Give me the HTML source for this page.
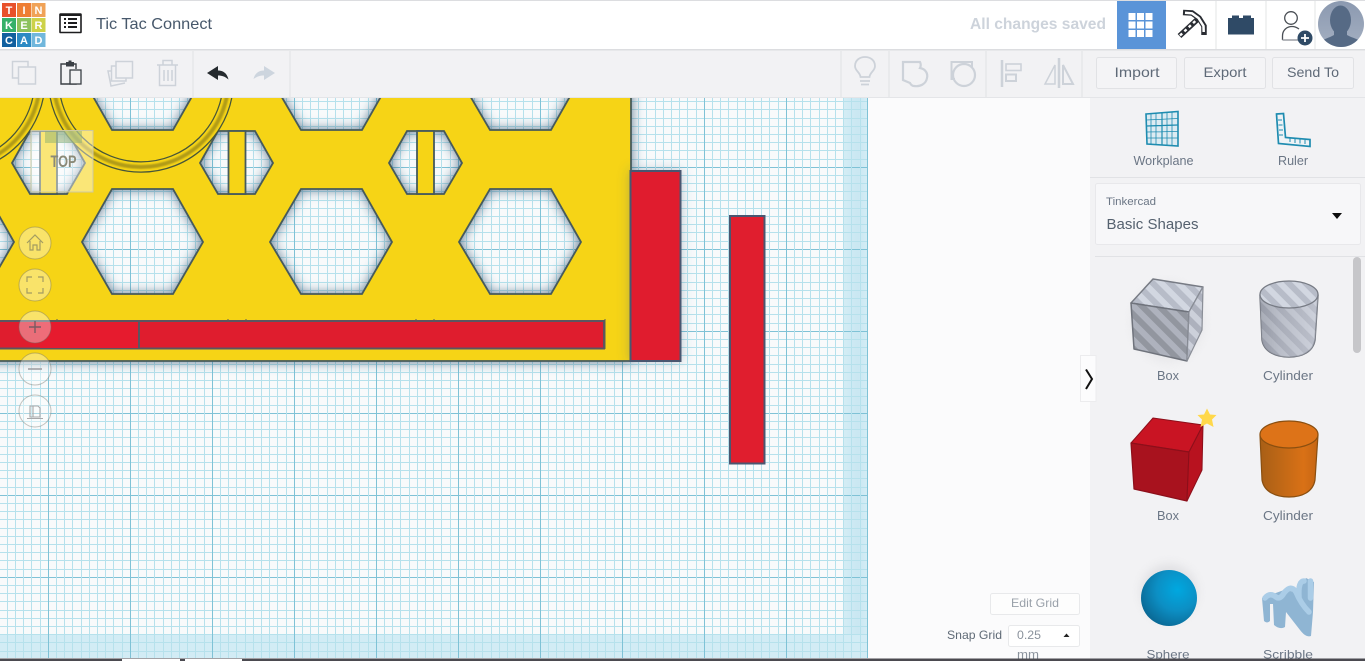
<!DOCTYPE html>
<html><head><meta charset="utf-8"><title>Tic Tac Connect</title>
<style>
html,body{margin:0;padding:0;width:1365px;height:661px;overflow:hidden;background:#fff}
svg{display:block;position:absolute;left:0;top:0}
text{font-family:"Liberation Sans",sans-serif}
</style></head><body>
<svg width="1365" height="661" viewBox="0 0 1365 661" xmlns="http://www.w3.org/2000/svg">
<defs>
<g id="vcol" shape-rendering="crispEdges" fill="none">
<path d="M8.500 97V658M16.500 97V658M24.500 97V658M33.500 97V658M41.500 97V658M49.500 97V658M57.500 97V658M65.500 97V658M74.500 97V658" stroke="#b6e1ec"/>
<path d="M.5 97V658" stroke="#7fc2d6"/>
</g>
<g id="hrow" shape-rendering="crispEdges" fill="none">
<path d="M0 8.500H868M0 16.500H868M0 24.500H868M0 33.500H868M0 41.500H868M0 49.500H868M0 57.500H868M0 65.500H868M0 74.500H868" stroke="#b6e1ec"/>
<path d="M0 .5H868" stroke="#7fc2d6"/>
</g>
<filter id="sh" x="-10%" y="-10%" width="120%" height="120%"><feDropShadow dx="0" dy="0" stdDeviation="6" flood-color="#2f5272" flood-opacity=".75"/></filter>
<filter id="sh2" x="-30%" y="-10%" width="160%" height="120%"><feDropShadow dx="0" dy="0" stdDeviation="6" flood-color="#3d5f7d" flood-opacity=".35"/></filter>
<filter id="soft" x="-30%" y="-30%" width="160%" height="160%"><feGaussianBlur stdDeviation="5"/></filter>
<filter id="b1" x="-5%" y="-5%" width="110%" height="110%"><feGaussianBlur stdDeviation=".8"/></filter>
<pattern id="hT" width="12" height="12" patternUnits="userSpaceOnUse" patternTransform="rotate(-45)"><rect width="12" height="12" fill="#d2d7e1"/><rect width="6" height="12" fill="#b7bcc8"/></pattern>
<pattern id="hF" width="12" height="12" patternUnits="userSpaceOnUse" patternTransform="rotate(-45)"><rect width="12" height="12" fill="#aeb2bd"/><rect width="6" height="12" fill="#92969f"/></pattern>
<pattern id="hR" width="12" height="12" patternUnits="userSpaceOnUse" patternTransform="rotate(-45)"><rect width="12" height="12" fill="#ccd0da"/><rect width="6" height="12" fill="#adb1bd"/></pattern>
<linearGradient id="cylS" x1="0" x2="1" y1="0" y2="0"><stop offset="0" stop-color="#7d818c"/><stop offset=".35" stop-color="#a5a9b4"/><stop offset="1" stop-color="#d0d4de"/></linearGradient>
<linearGradient id="cylO" x1="0" x2="1" y1="0" y2="0"><stop offset="0" stop-color="#a85f16"/><stop offset=".75" stop-color="#d97116"/><stop offset="1" stop-color="#c56614"/></linearGradient>
<radialGradient id="sph" cx=".65" cy=".35" r=".75"><stop offset="0" stop-color="#00a8e0"/><stop offset=".5" stop-color="#0c8fc4"/><stop offset="1" stop-color="#0a648f"/></radialGradient>
<linearGradient id="band" x1="0" x2="1" y1="0" y2="0"><stop offset="0" stop-color="#d4edf5"/><stop offset=".6" stop-color="#c9e7f2"/><stop offset="1" stop-color="#d4edf5"/></linearGradient>
<linearGradient id="avbg" x1="0" x2="0" y1="0" y2="1"><stop offset="0" stop-color="#8b99b0"/><stop offset="1" stop-color="#a4afc1"/></linearGradient>
<clipPath id="canvas"><rect x="0" y="97" width="868" height="561"/></clipPath>
<clipPath id="av"><circle cx="1341" cy="24" r="23"/></clipPath>
</defs>

<!-- page backgrounds -->
<rect width="1365" height="661" fill="#fbfbfc"/>

<!-- grid -->
<g clip-path="url(#canvas)">
<rect x="0" y="97" width="868" height="561" fill="#f8fafb"/>
<rect x="843" y="97" width="25" height="561" fill="url(#band)"/>
<rect x="0" y="635" width="868" height="23" fill="#d2ecf5"/>
<use href="#hrow" y="85"/><use href="#hrow" y="167"/><use href="#hrow" y="249"/><use href="#hrow" y="331"/><use href="#hrow" y="413"/><use href="#hrow" y="495"/><use href="#hrow" y="577"/>
<use href="#vcol" x="-34"/><use href="#vcol" x="48"/><use href="#vcol" x="130"/><use href="#vcol" x="212"/><use href="#vcol" x="294"/><use href="#vcol" x="376"/><use href="#vcol" x="458"/><use href="#vcol" x="540"/><use href="#vcol" x="622"/><use href="#vcol" x="704"/><use href="#vcol" x="786"/>
<path d="M867.5 97V658" stroke="#7fc2d6"/>

<!-- yellow plate with holes -->
<path filter="url(#sh)" fill="#f6d416" fill-rule="evenodd" stroke="#465a5c" stroke-width="1.800" d="M-60 60H631V361H-60Z
M82 242L112 189H173L203 242L173 294H112Z
M270 242L301 189H362L392 242L362 294H301Z
M459 242L490 189H551L581 242L551 294H490Z
M-107 242L-77 189H-16L14 242L-16 294H-77Z
M82 77L112 24H173L203 77L173 130H112Z
M270 77L301 24H362L392 77L362 130H301Z
M459 77L490 24H551L581 77L551 130H490Z
M12 163L30 131H67L85 163L67 194H30Z
M200 163L218 131H255L273 163L255 194H218Z
M389 163L407 131H444L462 163L444 194H407Z"/>
<!-- bars in small hexagons -->
<g fill="#f6d416" stroke="#465a5c" stroke-width="1.800">
<rect x="40" y="131" width="17" height="63"/>
<rect x="228.500" y="131" width="17" height="63"/>
<rect x="417" y="131" width="17" height="63"/>
</g>
<!-- rings -->
<g fill="none">
<circle cx="141" cy="79.500" r="87.500" stroke="#46553a" stroke-width="11.500"/>
<circle cx="141" cy="79.500" r="87.500" stroke="#f6d416" stroke-width="9"/>
<circle cx="141" cy="79.500" r="87.500" stroke="#b19b18" stroke-width="4" filter="url(#b1)"/>
<circle cx="-47.500" cy="79.500" r="87.500" stroke="#46553a" stroke-width="11.500"/>
<circle cx="-47.500" cy="79.500" r="87.500" stroke="#f6d416" stroke-width="9"/>
<circle cx="-47.500" cy="79.500" r="87.500" stroke="#b19b18" stroke-width="4" filter="url(#b1)"/>
</g>
<!-- long red bar -->
<rect x="-5" y="321" width="609" height="27.500" fill="#df1d2e" stroke="#5c5560" stroke-width="2"/>
<rect x="40" y="322" width="99" height="26" fill="#e61b2e"/>
<path d="M139 322V348" stroke="#5c5560" stroke-width="2"/>
<path d="M605 319V349M57 319V322M228 319V322M246 319V322M416 319V322M434 319V322" stroke="#5c5a5a" stroke-width="1"/>
<!-- red blocks -->
<rect x="630.500" y="171" width="50" height="190" fill="#e01e2e" stroke="#4a5670" stroke-width="2" filter="url(#sh2)"/>
<rect x="730" y="216" width="34.500" height="247.500" fill="#e01e2e" stroke="#4a5670" stroke-width="2"/>

<!-- view cube -->
<rect x="31" y="130.500" width="62" height="61.500" fill="#fff" fill-opacity=".42" stroke="#cfc9a0" stroke-width="1"/>
<rect x="45" y="131" width="37" height="12" fill="#8eb070" fill-opacity=".5"/>
<text x="50.500" y="167" font-size="17" font-weight="bold" fill="#8b8a78" textLength="26" lengthAdjust="spacingAndGlyphs">TOP</text>

<!-- nav buttons -->
<g fill="#fff" fill-opacity=".36" stroke="#6f6f66" stroke-opacity=".42">
<circle cx="35" cy="243" r="16"/><circle cx="35" cy="285" r="16"/><circle cx="35" cy="327" r="16"/><circle cx="35" cy="369" r="16"/><circle cx="35" cy="411" r="16"/>
</g>
<g fill="none" stroke="#a39c62" stroke-width="1.200">
<path d="M27 243L35 235L43 243M30 241V250H33V245H37V250H40V241"/>
<path d="M27 282V277H32M38 277H43V282M27 288V293H32M38 293H43V288"/>
</g>
<path d="M29 327H41M35 321V333" stroke="#7a5a62" stroke-width="1.400" fill="none"/>
<path d="M28 369H42" stroke="#a0a0a4" stroke-width="1.600"/>
<g fill="none" stroke="#a8a8aa" stroke-width="1.100"><path d="M30 406H38L40 408V417H30ZM33 406V417M27 418.500H43"/></g>
</g>

<!-- top bar -->
<rect x="0" y="0" width="1365" height="50" fill="#fff"/>
<rect x="0" y="0" width="1365" height="1" fill="#dcdde0"/>
<rect x="0" y="49" width="1365" height="1.500" fill="#dcdde0"/>
<!-- logo -->
<g>
<rect x="2" y="3" width="14" height="14" fill="#e8512a"/><rect x="17" y="3" width="14" height="14" fill="#ee7d33"/><rect x="31.500" y="3" width="14" height="14" fill="#f0a257"/>
<rect x="2" y="18" width="14" height="14" fill="#35b06a"/><rect x="17" y="18" width="14" height="14" fill="#8cc25d"/><rect x="31.500" y="18" width="14" height="14" fill="#cdd249"/>
<rect x="2" y="33" width="14" height="14" fill="#11609f"/><rect x="17" y="33" width="14" height="14" fill="#2c8ac4"/><rect x="31.500" y="33" width="14" height="14" fill="#71b7dc"/>
<g font-size="11" font-weight="bold" fill="#fff" text-anchor="middle">
<text x="9" y="14">T</text><text x="24" y="14">I</text><text x="38.500" y="14">N</text>
<text x="9" y="29">K</text><text x="24" y="29">E</text><text x="38.500" y="29">R</text>
<text x="9" y="44">C</text><text x="24" y="44">A</text><text x="38.500" y="44">D</text>
</g></g>
<!-- menu icon -->
<rect x="60" y="14" width="21" height="18.500" fill="none" stroke="#1d1d1f" stroke-width="1.600" rx=".5"/>
<path d="M60 15H81" stroke="#1d1d1f" stroke-width="2"/>
<path d="M64 19H66M68 19H77M64 23H66M68 23H77M64 27H66M68 27H77" stroke="#1d1d1f" stroke-width="2"/>
<text x="96" y="29" font-size="16" fill="#47586b" textLength="116" lengthAdjust="spacingAndGlyphs">Tic Tac Connect</text>
<text x="970" y="29" font-size="16" font-weight="bold" fill="#cdd3db" textLength="136" lengthAdjust="spacingAndGlyphs">All changes saved</text>
<!-- blue tile -->
<rect x="1117" y="1" width="49" height="48" fill="#5a94d8"/>
<g fill="#fff">
<rect x="1128.500" y="13" width="7" height="7"/><rect x="1137" y="13" width="7" height="7"/><rect x="1145.500" y="13" width="7" height="7"/>
<rect x="1128.500" y="21.500" width="7" height="7"/><rect x="1137" y="21.500" width="7" height="7"/><rect x="1145.500" y="21.500" width="7" height="7"/>
<rect x="1128.500" y="30" width="7" height="7"/><rect x="1137" y="30" width="7" height="7"/><rect x="1145.500" y="30" width="7" height="7"/>
</g>
<path d="M1216 1V49M1266 1V49M1315 1V49" stroke="#e3e4e6"/>
<!-- pickaxe -->
<g fill="none" stroke-linejoin="miter">
<path d="M1179.500 36L1199 18" stroke="#2a2d33" stroke-width="5.500"/>
<path d="M1180 35.500L1198 18.500" stroke="#fff" stroke-width="2.400" stroke-dasharray="3 3"/>
<path d="M1183 12.500L1192 13L1199 18L1204 26L1204 35" stroke="#2a2d33" stroke-width="5.500"/>
<path d="M1185 12.700L1192 13.300L1198.500 18L1203.500 26L1203.700 32" stroke="#fff" stroke-width="2.500"/>
</g>
<!-- brick -->
<path d="M1228 18H1232V15.500H1239V18H1243V15.500H1251V18H1254V34.500H1228Z" fill="#2f4a66"/>
<!-- add user -->
<circle cx="1291" cy="18" r="6.300" fill="none" stroke="#4a4f55" stroke-width="1.300"/>
<path d="M1282.500 40V36C1282.500 30 1287 26.500 1292 26.500C1295 26.500 1297 27.500 1299 29" fill="none" stroke="#4a4f55" stroke-width="1.300"/>
<path d="M1282.500 40H1298" stroke="#9a9ea4" stroke-width="1.500"/>
<circle cx="1305" cy="38" r="7.500" fill="#2f4a66"/>
<path d="M1301 38H1309M1305 34V42" stroke="#fff" stroke-width="1.800"/>
<!-- avatar -->
<circle cx="1341" cy="24" r="23" fill="url(#avbg)"/>
<g clip-path="url(#av)" fill="#566a85">
<ellipse cx="1340.500" cy="20" rx="10.500" ry="14.500"/>
<path d="M1334 28H1347V35C1352 38 1359 39 1363 43V47H1319V43C1323 39 1329 38 1334 35Z"/>
</g>

<!-- toolbar -->
<rect x="0" y="50.500" width="1365" height="47" fill="#f2f2f4"/>
<rect x="0" y="97" width="1090" height="1" fill="#e4e5e8"/>
<path d="M193 51V97M290 51V97M841 51V97M889 51V97M986 51V97M1082 51V97" stroke="#e0e1e4"/>
<g fill="none" stroke="#cdd2d9" stroke-width="1.500">
<!-- copy -->
<path d="M28 67V61.500H12.500V78H18"/><rect x="18.500" y="67" width="17" height="17"/>
<!-- duplicate -->
<rect x="116" y="61.500" width="16.500" height="16.500"/>
<path d="M116 66H111.500V81H126V78M111.500 71H108L111 86L125 83"/>
<!-- trash -->
<path d="M157 65H178M163 65V60.500H172V65M159.500 65V85.500H175.500V65M164 70V81M168 70V81M172 70V81"/>
<!-- bulb -->
<path d="M860 81H870M861 84.500H869M860.500 77C860 72 855 71 855 66C855 60 860 57 865 57C870 57 875 60 875 66C875 71 870 72 869.500 77Z" stroke-width="1.800"/>
<!-- shape 1 -->
<path d="M903 62H920C921 64 921 66 920 68C926 69 928 74 927 78C926 84 920 87 914 86C912 86 911 85 910 83L903 80Z" stroke-width="2.200"/>
<!-- shape 2 -->
<path d="M955 79H951.500V62H972V68" stroke-width="2"/><circle cx="964" cy="75" r="11" stroke-width="2.200"/>
<!-- align -->
<path d="M1002 60V87" stroke-width="2.500"/>
<rect x="1006" y="64" width="15" height="6.500" stroke-width="1.600"/><rect x="1006" y="74.500" width="10" height="6.500" stroke-width="2"/>
<!-- flip -->
<path d="M1059 58V88" stroke-width="2.500"/>
<path d="M1055 65V84H1045Z"/><path d="M1063 65V84H1073Z" stroke-width="2"/>
</g>
<path d="M275 73L264 66V70.500C259 70.500 255 73 253.500 79C257 76.500 260 75.500 264 75.500V80Z" fill="#cdd5de"/>
<path d="M207 73L218 66V70.500C223 70.500 227 73 228.500 79.500C225 76.500 222 75.500 218 75.500V80Z" fill="#252a2e"/>
<!-- paste -->
<path d="M66 64H61V84H76V80" fill="none" stroke="#3a3f45" stroke-width="1.400"/>
<path d="M74 64H76V69" fill="none" stroke="#3a3f45" stroke-width="1.400"/>
<rect x="66" y="62" width="8" height="4.500" fill="#3a3f45"/>
<rect x="68.500" y="60.500" width="3" height="2" fill="#3a3f45"/>
<rect x="70" y="70" width="11" height="14" fill="#f2f2f4" stroke="#3a3f45" stroke-width="1.300"/>
<!-- action buttons -->
<g fill="#f4f4f6" stroke="#e1e2e5">
<rect x="1096.500" y="57.500" width="80" height="31" rx="2"/>
<rect x="1184.500" y="57.500" width="81" height="31" rx="2"/>
<rect x="1272.500" y="57.500" width="81" height="31" rx="2"/>
</g>
<g font-size="14" fill="#5f6a78" text-anchor="middle">
<text x="1137" y="77" textLength="45" lengthAdjust="spacingAndGlyphs">Import</text>
<text x="1225" y="77" textLength="43" lengthAdjust="spacingAndGlyphs">Export</text>
<text x="1313" y="77" textLength="52" lengthAdjust="spacingAndGlyphs">Send To</text>
</g>

<!-- sidebar -->
<rect x="1090" y="97.500" width="275" height="561" fill="#f2f2f4"/>
<rect x="1090" y="97" width="275" height="1" fill="#e4e5e8"/>
<!-- workplane icon -->
<g fill="none" stroke="#1e8cb0">
<path d="M1146 114L1178 111.500V146L1147 144Z" stroke-width="1.600" fill="#dcebf2"/>
<path d="M1151 114V144.500M1156 113.500V145M1162 113V145M1167 112.500V145.500M1172 112V145.500M1146.500 120L1178 118.500M1146.500 126L1178 125M1146.500 132L1178 131.500M1147 138L1178 138" stroke-width=".8"/>
<path d="M1162 113V145M1146.500 126L1178 125" stroke-width="1.200"/>
</g>
<!-- ruler icon -->
<path d="M1276.500 114L1283.500 113.500L1285.500 137.500L1310 139.500V146.500L1278.500 143.500Z" fill="#eef3f6" stroke="#1e8cb0" stroke-width="1.700"/>
<path d="M1278 120H1282M1278.500 125H1282.500M1279 130H1283M1279 135H1283M1290 138V142M1295 139V143M1300 139.500V143.500M1305 140V144" stroke="#1e8cb0" stroke-width="1"/>
<g font-size="12.500" fill="#6b7685" text-anchor="middle">
<text x="1163.500" y="165" textLength="60" lengthAdjust="spacingAndGlyphs">Workplane</text>
<text x="1293" y="165" textLength="30" lengthAdjust="spacingAndGlyphs">Ruler</text>
</g>
<path d="M1090 177.500H1365M1095 256.500H1365" stroke="#e1e2e5"/>
<!-- dropdown -->
<rect x="1095.500" y="183.500" width="265" height="61" rx="2" fill="#f7f7f9" stroke="#e8e8eb"/>
<text x="1106" y="205" font-size="11" fill="#6b7685" textLength="50" lengthAdjust="spacingAndGlyphs">Tinkercad</text>
<text x="1106.500" y="229" font-size="15" fill="#55616f" textLength="92" lengthAdjust="spacing">Basic Shapes</text>
<path d="M1332 213H1342L1337 219Z" fill="#0d0d0d"/>
<!-- scrollbar -->
<rect x="1353" y="257" width="8" height="96" rx="4" fill="#c6c6c9"/>

<!-- chevron tab -->
<rect x="1080.500" y="355.500" width="15.500" height="46" fill="#fcfcfd" stroke="#ececee"/>
<path d="M1086 369.500L1092 379L1086 389" fill="none" stroke="#111" stroke-width="2"/>

<!-- shapes -->
<g stroke-linejoin="round">
<!-- striped box -->
<ellipse cx="1168" cy="322" rx="36" ry="40" fill="#c8c8cd" opacity=".25" filter="url(#soft)"/>
<path d="M1131 303L1153 279L1203 287L1189 312Z" fill="url(#hT)" stroke="#777b84" stroke-width="1.500"/>
<path d="M1131 303L1189 312L1187 361L1134 349Z" fill="url(#hF)" stroke="#6f737c" stroke-width="1.500"/>
<path d="M1189 312L1203 287L1202 330L1187 361Z" fill="url(#hR)" stroke="#8a8e97" stroke-width="1.200"/>
<!-- striped cylinder -->
<path d="M1260 295L1262 340C1264 352 1276 357 1289 357C1302 357 1313 352 1315 340L1318 295Z" fill="url(#cylS)" stroke="#6f737c" stroke-width="1.500"/>
<path d="M1260 295L1262 340C1264 352 1276 357 1289 357C1302 357 1313 352 1315 340L1318 295Z" fill="url(#hR)" opacity=".55"/>
<ellipse cx="1289" cy="294.500" rx="29" ry="13.500" fill="url(#hT)" stroke="#777b84" stroke-width="1.300"/>
<!-- red box -->
<path d="M1131 443L1153 418L1203 425L1189 452Z" fill="#c91423" stroke="#8c0f1a" stroke-width="1"/>
<path d="M1131 443L1189 452L1187 501L1134 489Z" fill="#a8121e" stroke="#8c0f1a" stroke-width="1.200"/>
<path d="M1189 452L1203 425L1202 470L1187 501Z" fill="#b8121f" stroke="#8c0f1a" stroke-width="1"/>
<path d="M1207 408.500L1210 414.500L1216.500 415L1212 419.500L1213.500 427L1207 423.500L1200.500 427L1202 419.500L1197.500 415L1204 414.500Z" fill="#ffd84a"/>
<!-- orange cylinder -->
<path d="M1260 435L1262 480C1264 492 1276 497 1289 497C1302 497 1313 492 1315 480L1318 435Z" fill="url(#cylO)" stroke="#8a4f10" stroke-width="1.200"/>
<ellipse cx="1289" cy="434.500" rx="29" ry="13.500" fill="#dd7318" stroke="#8a4f10" stroke-width="1.200"/>
<!-- sphere -->
<circle cx="1169" cy="592" r="28" fill="#c0c0c5" opacity=".35" filter="url(#soft)"/>
<circle cx="1169" cy="598" r="28" fill="url(#sph)"/>
<!-- scribble -->
<path d="M1262 598L1264 621Q1267 624 1270 621L1270 604H1273L1274 625Q1280 630 1285 627L1286 612L1300 630Q1306 638 1311 636L1313 612L1314 582L1306 578L1296 592L1284 590Z" fill="#8fb5d3"/>
<g fill="none" stroke="#abcde7" stroke-width="5.500" stroke-linecap="round">
<path d="M1265 598Q1270 592 1276 597Q1280 600 1284 593Q1291 584 1296 592Q1301 604 1309 612"/>
<path d="M1299 597Q1298 581 1304 581"/>
<path d="M1310.500 581V598"/>
</g>
</g>
<g font-size="12.500" fill="#6b7685" text-anchor="middle">
<text x="1168" y="380" textLength="22" lengthAdjust="spacingAndGlyphs">Box</text>
<text x="1288" y="380" textLength="50" lengthAdjust="spacingAndGlyphs">Cylinder</text>
<text x="1168" y="520" textLength="22" lengthAdjust="spacingAndGlyphs">Box</text>
<text x="1288" y="520" textLength="50" lengthAdjust="spacingAndGlyphs">Cylinder</text>
</g>
<g font-size="12" fill="#6b7685" text-anchor="middle">
<text x="1168" y="658.500" textLength="43" lengthAdjust="spacingAndGlyphs">Sphere</text>
<text x="1288" y="658.500" textLength="50" lengthAdjust="spacingAndGlyphs">Scribble</text>
</g>

<!-- grid controls -->
<rect x="990.500" y="593.500" width="89" height="21" rx="2" fill="#fdfdfd" stroke="#e8e9eb"/>
<text x="1035" y="607" font-size="12" fill="#9aa1aa" text-anchor="middle" textLength="48" lengthAdjust="spacingAndGlyphs">Edit Grid</text>
<text x="947" y="639" font-size="12" fill="#5f6a76" textLength="55" lengthAdjust="spacingAndGlyphs">Snap Grid</text>
<rect x="1008.500" y="625.500" width="71" height="21" rx="2" fill="#fff" stroke="#e8e9eb"/>
<text x="1017" y="639" font-size="12" fill="#8a929c" textLength="24" lengthAdjust="spacingAndGlyphs">0.25</text>
<path d="M1063.500 637H1069.500L1066.500 633.500Z" fill="#222"/>
<text x="1017" y="658.500" font-size="12" fill="#8a929c" textLength="22" lengthAdjust="spacingAndGlyphs">mm</text>

<!-- bottom strip -->
<rect x="0" y="658.500" width="1365" height="2.500" fill="#4b4a50"/>
<rect x="122" y="659" width="58" height="2" fill="#fff"/>
<rect x="185" y="659" width="57" height="2" fill="#fff"/>
</svg>
</body></html>
